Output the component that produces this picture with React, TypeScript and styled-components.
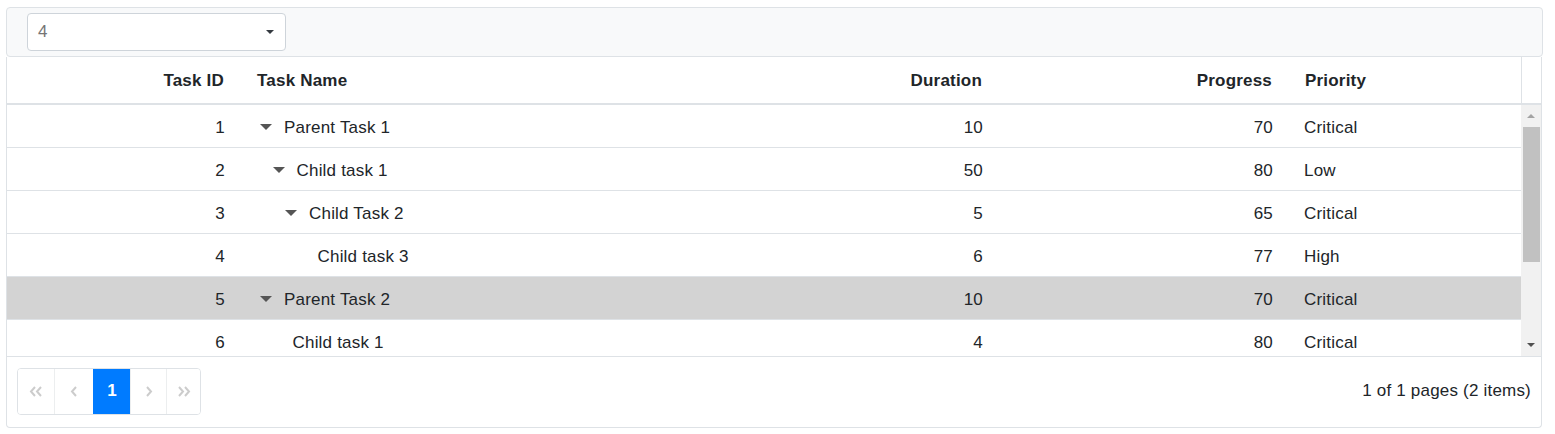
import React from 'react';
import styled, { createGlobalStyle } from 'styled-components';

const GlobalStyle = createGlobalStyle`
	body {
		margin: 0;
		background: #fff;
		font-family: "Liberation Sans", Arial, sans-serif;
		font-size: 17px;
		letter-spacing: 0.2px;
		color: #212529;
	}
`;

type Task = {
	id: number;
	name: string;
	level: number;
	expandable: boolean;
	duration: number;
	progress: number;
	priority: string;
};

const tasks: Task[] = [
	{ id: 1, name: 'Parent Task 1', level: 0, expandable: true, duration: 10, progress: 70, priority: 'Critical' },
	{ id: 2, name: 'Child task 1', level: 1, expandable: true, duration: 50, progress: 80, priority: 'Low' },
	{ id: 3, name: 'Child Task 2', level: 2, expandable: true, duration: 5, progress: 65, priority: 'Critical' },
	{ id: 4, name: 'Child task 3', level: 3, expandable: false, duration: 6, progress: 77, priority: 'High' },
	{ id: 5, name: 'Parent Task 2', level: 0, expandable: true, duration: 10, progress: 70, priority: 'Critical' },
	{ id: 6, name: 'Child task 1', level: 1, expandable: false, duration: 4, progress: 80, priority: 'Critical' },
];

const columns = [
	{ key: 'id', title: 'Task ID', width: 233, align: 'right' },
	{ key: 'name', title: 'Task Name', width: 468, align: 'left' },
	{ key: 'duration', title: 'Duration', width: 290, align: 'right' },
	{ key: 'progress', title: 'Progress', width: 290, align: 'right' },
	{ key: 'priority', title: 'Priority', width: 233, align: 'left' },
] as const;

const Page = styled.div`
	padding: 7px 12px 0 6px;
`;

const Toolbar = styled.div`
	height: 48px;
	display: flex;
	align-items: center;
	padding-left: 20px;
	background: #f8f9fa;
	border: 1px solid #dee2e6;
	border-radius: 4px;
`;

const Select = styled.div`
	width: 237px;
	height: 36px;
	display: flex;
	align-items: center;
	justify-content: space-between;
	padding: 0 10px 0 10px;
	background: #fff;
	border: 1px solid #ced4da;
	border-radius: 4px;
	color: #757575;
`;

const Caret = styled.span`
	width: 0;
	height: 0;
	margin-right: 1px;
	border-left: 4px solid transparent;
	border-right: 4px solid transparent;
	border-top: 4px solid #343a40;
`;

const Grid = styled.div`
	width: 1534px;
	border: 1px solid #dee2e6;
	border-top: none;
	border-radius: 0 0 4px 4px;
`;

const HeaderRow = styled.div`
	display: flex;
	height: 46px;
	border-bottom: 2px solid #dee2e6;
`;

const HeaderCell = styled.div<{ $w: number; $align: string }>`
	width: ${p => p.$w}px;
	box-sizing: border-box;
	padding: 2px 16px 0 17px;
	display: flex;
	align-items: center;
	justify-content: ${p => (p.$align === 'right' ? 'flex-end' : 'flex-start')};
	font-weight: bold;
`;

const HeaderGap = styled.div`
	flex: 1;
	border-left: 1px solid #dee2e6;
`;

const Body = styled.div`
	display: flex;
	height: 251px;
	overflow: hidden;
`;

const Rows = styled.div`
	width: 1514px;
`;

const Row = styled.div<{ $selected?: boolean }>`
	display: flex;
	height: 42px;
	border-bottom: 1px solid #dee2e6;
	background: ${p => (p.$selected ? '#d3d3d3' : '#fff')};
`;

const Cell = styled.div<{ $w: number; $align: string }>`
	width: ${p => p.$w}px;
	box-sizing: border-box;
	padding: 3px 15px 0 16px;
	display: flex;
	align-items: center;
	justify-content: ${p => (p.$align === 'right' ? 'flex-end' : 'flex-start')};
`;

const TreeCell = styled.div<{ $w: number; $level: number }>`
	width: ${p => p.$w}px;
	box-sizing: border-box;
	padding: 3px 0 0 ${p => 16 + p.$level * 12.5}px;
	display: flex;
	align-items: center;
`;

const Expander = styled.span<{ $leaf: boolean }>`
	width: ${p => (p.$leaf ? 24 : 28)}px;
	flex-shrink: 0;
	display: flex;
	align-items: center;
	padding-left: 4px;
	box-sizing: border-box;
`;

const TreeArrow = styled.span`
	width: 0;
	height: 0;
	margin-top: -2px;
	border-left: 6px solid transparent;
	border-right: 6px solid transparent;
	border-top: 6px solid #555;
`;

const Scrollbar = styled.div`
	flex: 1;
	display: flex;
	flex-direction: column;
	align-items: center;
	background: #f1f1f1;
`;

const ScrollButton = styled.div<{ $up?: boolean }>`
	height: 22px;
	width: 100%;
	display: flex;
	align-items: center;
	justify-content: center;
	&::after {
		content: '';
		width: 0;
		height: 0;
		border-left: 4px solid transparent;
		border-right: 4px solid transparent;
		${p => (p.$up ? 'border-bottom: 4px solid #a3a3a3;' : 'border-top: 4px solid #505050;')}
	}
`;

const Thumb = styled.div`
	width: 17px;
	height: 135px;
	background: #c1c1c1;
`;

const Track = styled.div`
	flex: 1;
`;

const Pager = styled.div`
	display: flex;
	align-items: center;
	justify-content: space-between;
	height: 70px;
	padding: 0 10px;
	border-top: 1px solid #dee2e6;
`;

const PagerGroup = styled.div`
	display: flex;
	height: 45px;
	border: 1px solid #dee2e6;
	border-radius: 4px;
	overflow: hidden;
	margin-top: -2px;
`;

const PageButton = styled.div<{ $w: number; $active?: boolean }>`
	width: ${p => p.$w}px;
	box-sizing: border-box;
	display: flex;
	align-items: center;
	justify-content: center;
	border-left: 1px solid ${p => (p.$active ? '#007bff' : '#eceeef')};
	background: ${p => (p.$active ? '#007bff' : '#fff')};
	color: ${p => (p.$active ? '#fff' : '#cccccc')};
	font-weight: bold;
	&:first-child {
		border-left: none;
	}
`;

const PageInfo = styled.div`
	margin-top: -2px;
`;

const Chevron: React.FC<{ dir: 'left' | 'right'; double?: boolean }> = ({ dir, double }) => {
	const single = dir === 'left' ? 'M6 1 L2 5.5 L6 10' : 'M2 1 L6 5.5 L2 10';
	const second = dir === 'left' ? 'M12 1 L8 5.5 L12 10' : 'M8 1 L12 5.5 L8 10';
	return (
		<svg width={double ? 14 : 8} height="11" viewBox={double ? '0 0 14 11' : '0 0 8 11'}>
			<path d={single} fill="none" stroke="currentColor" strokeWidth="2" />
			{double && <path d={second} fill="none" stroke="currentColor" strokeWidth="2" />}
		</svg>
	);
};

const App: React.FC = () => {
	return (
		<Page>
			<GlobalStyle />
			<Toolbar>
				<Select>
					<span>4</span>
					<Caret />
				</Select>
			</Toolbar>
			<Grid>
				<HeaderRow>
					{columns.map(c => (
						<HeaderCell key={c.key} $w={c.width} $align={c.align}>
							{c.title}
						</HeaderCell>
					))}
					<HeaderGap />
				</HeaderRow>
				<Body>
					<Rows>
						{tasks.map(t => (
							<Row key={t.id} $selected={t.id === 5}>
								<Cell $w={233} $align="right">{t.id}</Cell>
								<TreeCell $w={468} $level={t.level}>
									<Expander $leaf={!t.expandable}>
										{t.expandable && <TreeArrow />}
									</Expander>
									{t.name}
								</TreeCell>
								<Cell $w={290} $align="right">{t.duration}</Cell>
								<Cell $w={290} $align="right">{t.progress}</Cell>
								<Cell $w={233} $align="left">{t.priority}</Cell>
							</Row>
						))}
					</Rows>
					<Scrollbar>
						<ScrollButton $up />
						<Thumb />
						<Track />
						<ScrollButton />
					</Scrollbar>
				</Body>
				<Pager>
					<PagerGroup>
						<PageButton $w={36}><Chevron dir="left" double /></PageButton>
						<PageButton $w={39}><Chevron dir="left" /></PageButton>
						<PageButton $w={37} $active>1</PageButton>
						<PageButton $w={36}><Chevron dir="right" /></PageButton>
						<PageButton $w={34}><Chevron dir="right" double /></PageButton>
					</PagerGroup>
					<PageInfo>1 of 1 pages (2 items)</PageInfo>
				</Pager>
			</Grid>
		</Page>
	);
};

export default App;
